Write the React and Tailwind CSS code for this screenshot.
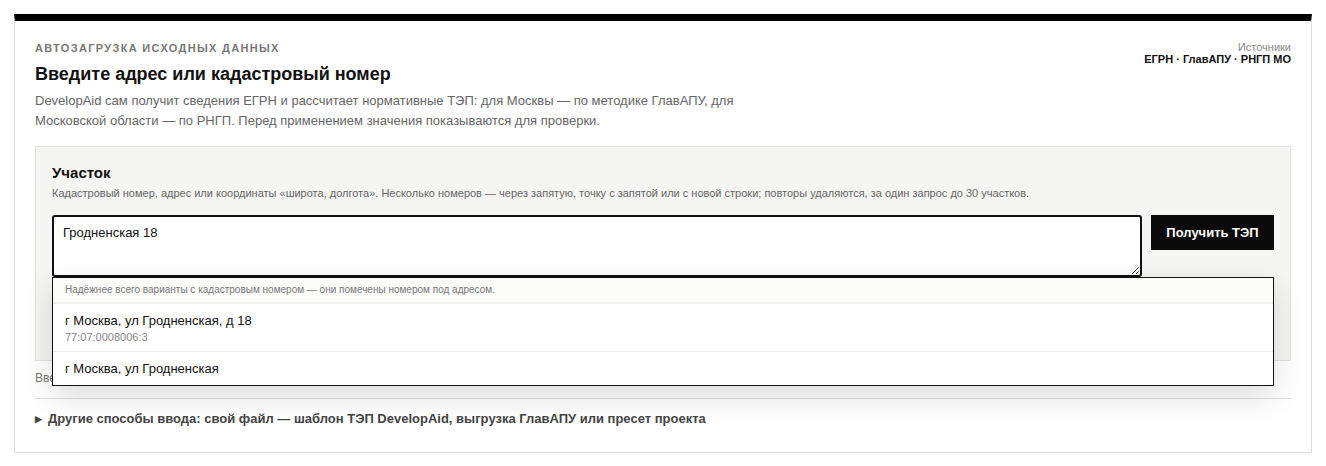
const suggestions = [
  { address: "г Москва, ул Гродненская, д 18", cadastral: "77:07:0008006:3" },
  { address: "г Москва, ул Гродненская" },
];

function SuggestList() {
  return (
    <div className="absolute left-0 right-0 top-full z-10 border border-[#111] bg-white shadow-[0_10px_28px_rgba(0,0,0,0.14)]">
      {/* Hint */}
      <div className="border-b-2 border-[#efefed] bg-[#fcfcfb] px-3 py-[4px] text-[10px] leading-[16px] text-[#777]">
        Надёжнее всего варианты с кадастровым номером — они помечены номером под адресом.
      </div>

      {suggestions.map((s, i) => (
        <div
          key={s.address}
          className={`px-3 pt-[8px] pb-[7px] ${i < suggestions.length - 1 ? "border-b border-[#ececec]" : ""}`}
        >
          <div className="text-[13px] leading-[18px] text-[#111]">{s.address}</div>
          {s.cadastral && (
            <div className="text-[11px] leading-[14px] text-[#888]">{s.cadastral}</div>
          )}
        </div>
      ))}
    </div>
  );
}

export default function App() {
  return (
    <div className="bg-white p-[14px] font-['Liberation_Sans',Arial,sans-serif]">
      <section className="border border-t-[7px] border-[#dedede] border-t-black bg-white px-5 pt-[19px] pb-[23px]">
        {/* Header */}
        <div className="flex items-start justify-between">
          <div>
            <div className="text-[11px] font-bold uppercase leading-[16px] tracking-[0.12em] text-[#777]">
              Автозагрузка исходных данных
            </div>
            <h2 className="mt-[6px] text-[18px] font-bold leading-[24px] text-[#111]">
              Введите адрес или кадастровый номер
            </h2>
            <p className="mt-[5px] max-w-[740px] text-[13px] leading-[20px] text-[#666]">
              DevelopAid сам получит сведения ЕГРН и рассчитает нормативные ТЭП: для Москвы — по методике ГлавАПУ, для
              Московской области — по РНГП. Перед применением значения показываются для проверки.
            </p>
          </div>
          <div className="pt-[1px] text-right text-[11px] leading-[12px]">
            <div className="text-[#888]">Источники</div>
            <div className="font-bold text-[#111]">ЕГРН · ГлавАПУ · РНГП МО</div>
          </div>
        </div>

        {/* Plot panel */}
        <div className="mt-[15px] border border-[#e2e2df] bg-[#f5f5f3] px-4 pt-4 pb-4">
          <div className="text-[15px] font-bold leading-[20px] text-[#111]">Участок</div>
          <div className="mt-[2px] text-[11px] leading-[16px] text-[#666]">
            Кадастровый номер, адрес или координаты «широта, долгота». Несколько номеров — через запятую, точку с
            запятой или с новой строки; повторы удаляются, за один запрос до 30 участков.
          </div>

          <div className="relative mt-[14px] flex items-start gap-[9px]">
            <textarea
              readOnly
              value="Гродненская 18"
              rows={2}
              className="h-[62px] flex-1 rounded-[3px] border-2 border-[#111] bg-white px-[9px] py-[7px] text-[13px] leading-[18px] text-[#111] outline-none"
            />
            <button className="h-[35px] w-[123px] bg-[#0a0a0a] text-[13px] font-bold text-white">
              Получить ТЭП
            </button>
            <SuggestList />
          </div>

          {/* Options under the field (covered by suggestions) */}
          <div className="mt-[14px] flex h-[53px] items-center gap-4 text-[12px] text-[#666]">
            <span>Регион определяется автоматически</span>
          </div>
        </div>

        <div className="mt-[8px] text-[12px] leading-[18px] text-[#777]">
          Введите хотя бы один адрес или номер, чтобы получить ТЭП.
        </div>

        {/* Other input methods */}
        <div className="mt-[11px] border-t border-[#dddddd] pt-[10px]">
          <div className="flex items-center gap-[6px] text-[13px] font-bold leading-[20px] text-[#444]">
            <span className="text-[9px] leading-none">▶</span>
            <span>Другие способы ввода: свой файл — шаблон ТЭП DevelopAid, выгрузка ГлавАПУ или пресет проекта</span>
          </div>
        </div>
      </section>
    </div>
  );
}
